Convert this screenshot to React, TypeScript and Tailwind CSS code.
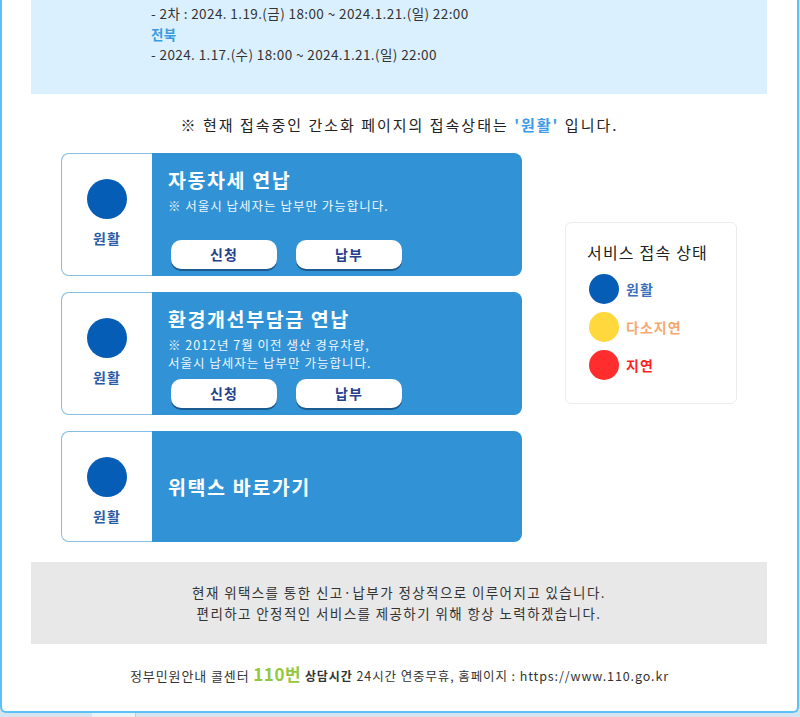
const font = "font-['Noto_Sans_CJK_KR','Noto_Sans',sans-serif]";

type Service = {
  title: string;
  notes?: string[];
  buttons?: boolean;
  tall: boolean;
};

const services: Service[] = [
  { title: "자동차세 연납", notes: ["※ 서울시 납세자는 납부만 가능합니다."], buttons: true, tall: true },
  {
    title: "환경개선부담금 연납",
    notes: ["※ 2012년 7월 이전 생산 경유차량,", "서울시 납세자는 납부만 가능합니다."],
    buttons: true,
    tall: true,
  },
  { title: "위택스 바로가기", tall: false },
];

const legend = [
  { label: "원활", dot: "bg-[#055db6]", text: "text-[#3b6fbe]" },
  { label: "다소지연", dot: "bg-[#ffd83d]", text: "text-[#f7a870]" },
  { label: "지연", dot: "bg-[#ff2d2d]", text: "text-[#ff1f1f]" },
];

function ServiceCard({ s }: { s: Service }) {
  return (
    <div className={`flex ${s.tall ? "h-[123px]" : "h-[111px]"}`}>
      <div className="w-[91px] shrink-0 flex flex-col items-center gap-[10px] bg-white border border-r-0 border-[#86bde3] rounded-l-[8px] pt-[25px]">
        <div className="w-[40px] h-[40px] rounded-full bg-[#055db6]" />
        <span className="text-[14px] font-bold text-[#2b5ca8] leading-[18px] tracking-[1px]">원활</span>
      </div>
      <div
        className={`flex-1 bg-[#3193d6] rounded-r-[8px] pl-[16px] flex flex-col ${
          s.buttons ? "pt-[14px] pb-[7px]" : "justify-center"
        }`}
      >
        <div className="text-white text-[19.5px] font-bold leading-[26px] tracking-[1.6px]">{s.title}</div>
        {s.notes && (
          <div className="text-[#f0f7fd] text-[12.5px] leading-[17.5px] mt-[4px] tracking-[1px]">
            {s.notes.map((n) => (
              <div key={n}>{n}</div>
            ))}
          </div>
        )}
        {s.buttons && (
          <div className="mt-auto flex gap-[19px] pl-[3px]">
            {["신청", "납부"].map((b) => (
              <div
                key={b}
                className="w-[106px] h-[29px] rounded-[10px] bg-white shadow-[0_2px_0_#1b5b8f] flex items-center justify-center text-[14px] font-semibold text-[#24408a] tracking-[1px]"
              >
                {b}
              </div>
            ))}
          </div>
        )}
      </div>
    </div>
  );
}

export default function App() {
  return (
    <div className={`w-[800px] h-[717px] bg-[#d5e4ee] overflow-hidden ${font}`}>
      <div className="w-[799px] h-[713px] bg-white border-x-2 border-b-2 border-[#5cc1f5] rounded-b-[6px] flex flex-col">
        <div className="ml-[29px] w-[736px] h-[94px] bg-[#dbf0fe] pl-[120px] pt-[3px] text-[13.5px] leading-[20.5px] text-[#333] tracking-[0.4px]">
          <div>- 2차 : 2024. 1.19.(금) 18:00 ~ 2024.1.21.(일) 22:00</div>
          <div className="text-[#3a9be2] font-semibold">전북</div>
          <div>- 2024. 1.17.(수) 18:00 ~ 2024.1.21.(일) 22:00</div>
        </div>

        <p className="mt-[20px] text-center text-[15px] leading-[22px] text-[#222] tracking-[2px]">
          ※ 현재 접속중인 간소화 페이지의 접속상태는{" "}
          <span className="text-[#3c9be8] font-bold">'원활'</span> 입니다.
        </p>

        <div className="mt-[17px] flex ml-[59px]">
          <div className="w-[461px] flex flex-col gap-[16px]">
            {services.map((s) => (
              <ServiceCard key={s.title} s={s} />
            ))}
          </div>
          <div className="ml-[43px] mt-[69px] w-[172px] h-[182px] border border-[#ececec] rounded-[6px] pl-[21px] pt-[17px]">
            <div className="text-[16px] leading-[24px] text-[#222] tracking-[1.2px]">서비스 접속 상태</div>
            <div className="mt-[10px] flex flex-col gap-[8px] pl-[2px]">
              {legend.map((l) => (
                <div key={l.label} className="flex items-center gap-[7px]">
                  <div className={`w-[30px] h-[30px] rounded-full ${l.dot}`} />
                  <span className={`text-[14px] font-semibold tracking-[1px] ${l.text}`}>{l.label}</span>
                </div>
              ))}
            </div>
          </div>
        </div>

        <div className="mt-[20px] ml-[29px] w-[736px] h-[82px] bg-[#e8e8e8] flex flex-col items-center justify-center text-[13.5px] leading-[21px] text-[#333] tracking-[1.4px]">
          <div>현재 위택스를 통한 신고·납부가 정상적으로 이루어지고 있습니다.</div>
          <div>편리하고 안정적인 서비스를 제공하기 위해 항상 노력하겠습니다.</div>
        </div>

        <div className="mt-[20px] text-center leading-[20px] text-[#333] text-[13px] tracking-[0.9px]">
          정부민원안내 콜센터{" "}
          <span className="text-[17px] font-bold text-[#93c83c] tracking-[0.5px]">110번</span>{" "}
          <span className="text-[12px] font-bold">상담시간</span>{" "}
          <span className="text-[12.5px]">24시간 연중무휴, 홈페이지 : https://www.110.go.kr</span>
        </div>
      </div>
      <div className="flex h-[4px]">
        <div className="w-[92px]" />
        <div className="w-[44px] bg-[#eaf3f8] border-r border-[#bfcfd9]" />
      </div>
    </div>
  );
}
